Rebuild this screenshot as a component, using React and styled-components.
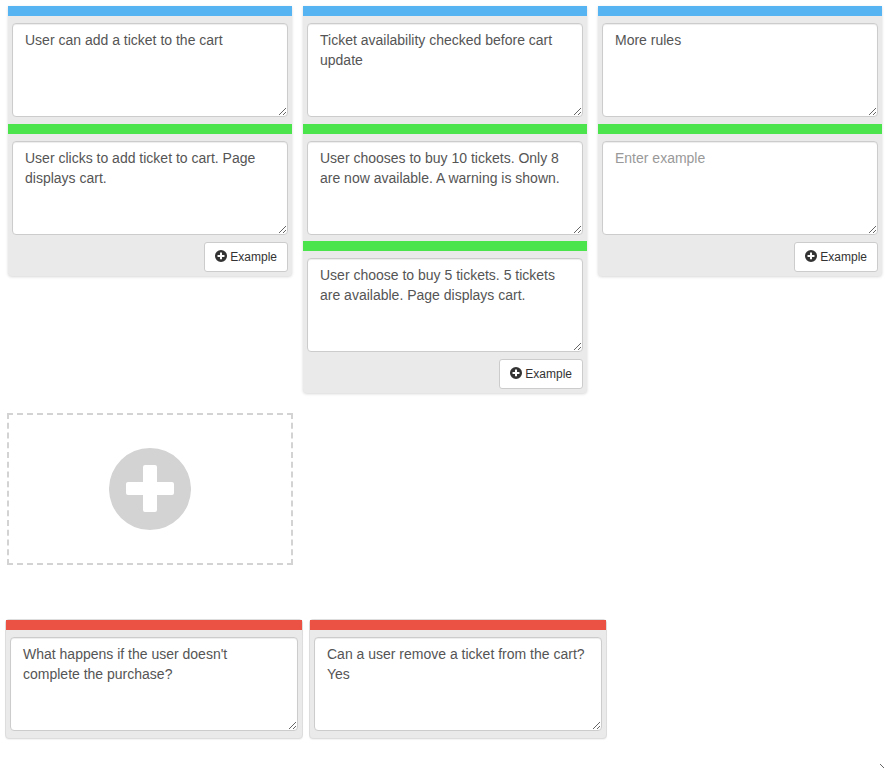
import React from 'react';
import styled, { createGlobalStyle } from 'styled-components';

const GlobalStyle = createGlobalStyle`
  * {
    box-sizing: border-box;
  }
  body {
    margin: 0;
    background: #fff;
    color: #333;
    font-family: 'Liberation Sans', Arial, sans-serif;
    font-size: 14px;
    line-height: 20px;
  }
`;

const Page = styled.main`
  display: flex;
  flex-direction: column;
  min-height: 100vh;
`;
const Rules = styled.section`
  display: grid;
  grid-template-columns: repeat(3, minmax(0, 1fr));
  align-items: start;
  column-gap: 11px;
  row-gap: 20px;
  padding: 6px 3px 0 8px;
`;
const Questions = styled.section`
  display: flex;
  gap: 6px;
  padding: 0 5px;
  margin-top: 54px;
`;
const RuleCard = styled.article`
  background: #eaeaea;
  border-radius: 0 0 4px 4px;
  box-shadow: 0 1px 3px rgba(0, 0, 0, 0.16);
`;
const QuestionCard = styled.article`
  flex: 0 1 298px;
  background: #eaeaea;
  border: 1px solid #ddd;
  border-radius: 4px;
  box-shadow: 0 1px 1px rgba(0, 0, 0, 0.05);
`;
const Bar = styled.div`
  height: 10px;
  background: ${(props) => props.$color};
`;
const Field = styled.div`
  padding: 7px 4px ${(props) => (props.$tight ? '6px' : '7px')};
`;
const TextArea = styled.textarea`
  display: block;
  width: 100%;
  height: 94px;
  padding: 6px 12px;
  border: 1px solid #ccc;
  border-radius: 4px;
  background: #fff;
  box-shadow: inset 0 1px 1px rgba(0, 0, 0, 0.075);
  color: #555;
  font-family: inherit;
  font-size: 14px;
  line-height: 20px;
  resize: vertical;

  &::placeholder {
    color: #999;
    opacity: 1;
  }
`;
const CardFooter = styled.div`
  display: flex;
  justify-content: flex-end;
  padding: 1px 4px 4px;
`;
const ExampleButton = styled.button`
  display: flex;
  align-items: center;
  gap: 3px;
  padding: 5px 10px;
  border: 1px solid #ccc;
  border-radius: 3px;
  background: #fff;
  color: #333;
  font-family: inherit;
  font-size: 12px;
  line-height: 18px;
  cursor: pointer;

  svg {
    margin-bottom: 2px;
  }
`;
const AddRuleButton = styled.button`
  display: flex;
  align-items: center;
  justify-content: center;
  height: 152px;
  margin: 0 -1px;
  padding: 0;
  border: 2px dashed #d3d3d3;
  background: none;
  color: #d3d3d3;
  cursor: pointer;
`;
const Grip = styled.svg`
  display: block;
  margin: auto 0 0 auto;
`;

const BLUE = '#56b4f3';
const GREEN = '#4ce44c';
const RED = '#eb5244';

const rules = [
  {
    text: 'User can add a ticket to the cart',
    examples: ['User clicks to add ticket to cart. Page displays cart.'],
  },
  {
    text: 'Ticket availability checked before cart update',
    examples: [
      'User chooses to buy 10 tickets. Only 8 are now available. A warning is shown.',
      'User choose to buy 5 tickets. 5 tickets are available. Page displays cart.',
    ],
  },
  { text: 'More rules', examples: [''] },
];

const questions = [
  "What happens if the user doesn't complete the purchase?",
  'Can a user remove a ticket from the cart?\nYes',
];

const PlusSign = ({ size }) => (
  <svg width={size} height={size} viewBox="0 0 82 82" aria-hidden="true">
    <path
      fill="currentColor"
      fillRule="evenodd"
      d="M41 0a41 41 0 1 1 0 82a41 41 0 1 1 0-82zM36 17q-2 0-2 2v15H19q-2 0-2 2v9q0 2 2 2h15v15q0 2 2 2h10q2 0 2-2V47h15q2 0 2-2v-9q0-2-2-2H48V19q0-2-2-2z"
    />
  </svg>
);

const App = () => (
  <>
    <GlobalStyle />
    <Page>
      <Rules>
        {rules.map((rule) => (
          <RuleCard key={rule.text}>
            <Bar $color={BLUE} />
            <Field>
              <TextArea aria-label="Rule" placeholder="Enter rule" defaultValue={rule.text} />
            </Field>
            {rule.examples.map((example, i) => (
              <React.Fragment key={i}>
                <Bar $color={GREEN} />
                <Field $tight>
                  <TextArea aria-label="Example" placeholder="Enter example" defaultValue={example} />
                </Field>
              </React.Fragment>
            ))}
            <CardFooter>
              <ExampleButton type="button">
                <PlusSign size={12} />
                Example
              </ExampleButton>
            </CardFooter>
          </RuleCard>
        ))}
        <AddRuleButton type="button" aria-label="Add rule">
          <PlusSign size={82} />
        </AddRuleButton>
      </Rules>
      <Questions>
        {questions.map((question) => (
          <QuestionCard key={question}>
            <Bar $color={RED} />
            <Field>
              <TextArea aria-label="Question" placeholder="Enter question" defaultValue={question} />
            </Field>
          </QuestionCard>
        ))}
      </Questions>
      <Grip width="5" height="4" viewBox="0 0 5 4" aria-hidden="true">
        <path d="M0 0h1v1h1v1h1v1h1v1h-1v-1h-1v-1h-1v-1h-1z" fill="#666" />
      </Grip>
    </Page>
  </>
);

export default App;
